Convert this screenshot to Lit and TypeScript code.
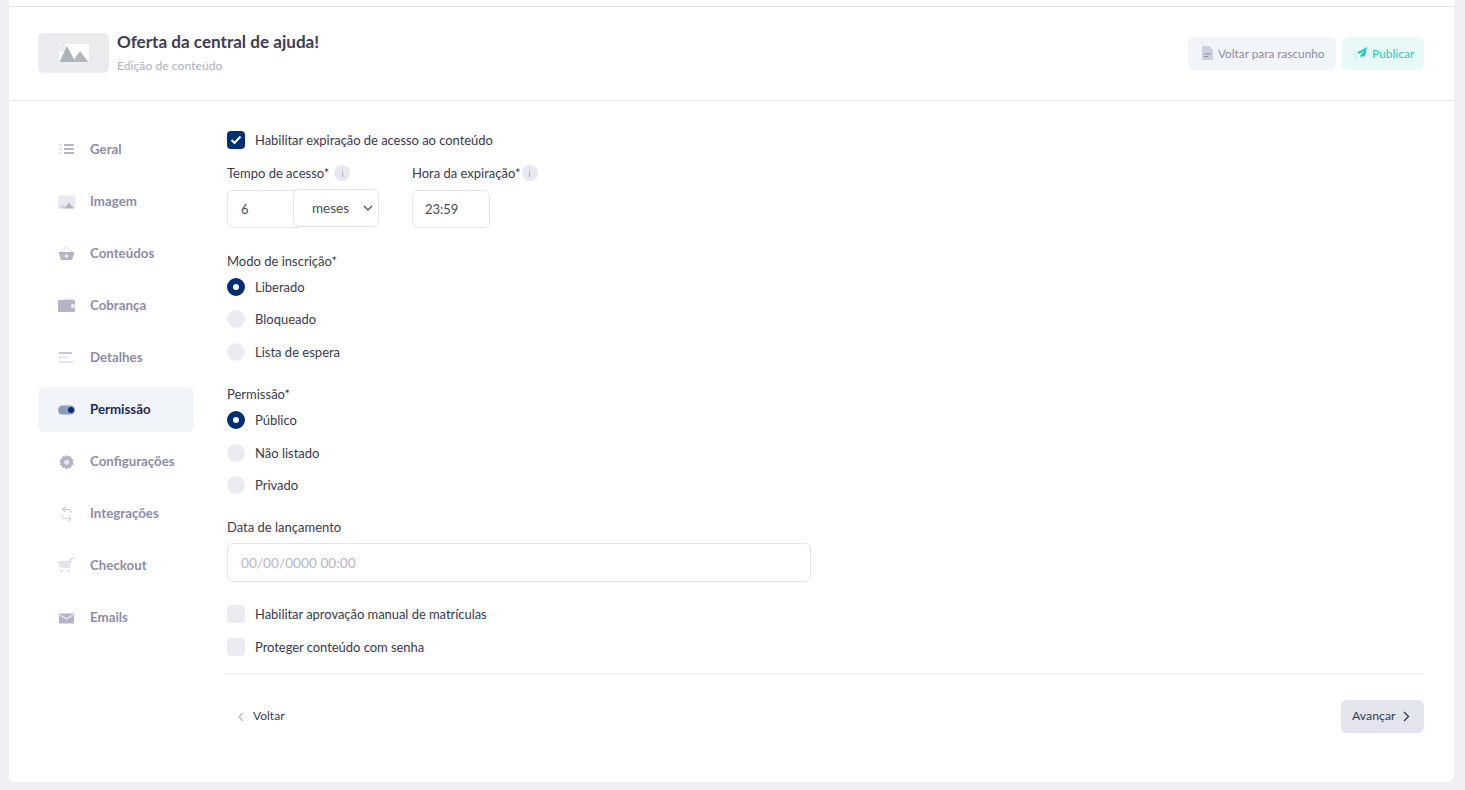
import { LitElement, html, css, svg } from "lit";
import { customElement } from "lit/decorators.js";

const icons: Record<string, any> = {
  geral: svg`<g transform="translate(1 1)"><rect x="0" y="1" width="3" height="2" fill="#e4e4ec"/><rect x="0" y="5" width="3" height="2" fill="#e4e4ec"/><rect x="0" y="9" width="3" height="2" fill="#e4e4ec"/><rect x="5" y="1" width="10" height="2" rx=".5" fill="#b5b3c6"/><rect x="5" y="5" width="10" height="2" rx=".5" fill="#b5b3c6"/><rect x="5" y="9" width="10" height="2" rx=".5" fill="#b5b3c6"/></g>`,
  imagem: svg`<g transform="translate(0 1.500)"><rect x="0" y="0" width="17" height="13" fill="#e9e9f0"/><path d="M6 13l5-6 5 6z" fill="#b5b3c6"/><path d="M1 13l4-4 3 4z" fill="#d3d3de"/></g>`,
  conteudos: svg`<g transform="translate(0 .5)"><path d="M2.500 6L8.500 0.800 14.500 6" fill="none" stroke="#e4e4ec" stroke-width="1.200"/><path d="M0.500 5.500h16l-2.200 7.200a1 1 0 0 1-1 .8H3.700a1 1 0 0 1-1-.8z" fill="#b5b3c6"/><circle cx="8.500" cy="9.500" r="1.600" fill="#fff"/></g>`,
  cobranca: svg`<path d="M2 2L15 0v2z" fill="#e4e4ec"/><rect x="0" y="2" width="17" height="12" rx="1.200" fill="#b5b3c6"/><circle cx="15" cy="8" r="2.200" fill="#e9e9f0"/>`,
  detalhes: svg`<g transform="translate(1 2)"><rect x="0" y="0" width="13" height="2" fill="#c9c8d6"/><rect x="0" y="4.500" width="9" height="2" fill="#e4e4ec"/><rect x="0" y="9" width="14" height="2" fill="#e4e4ec"/></g>`,
  permissao: svg`<g transform="translate(0 3.500)"><rect x="0" y="0" width="17" height="9" rx="4.500" fill="#8d9cbd"/><circle cx="13" cy="4.500" r="3" fill="#002e75"/></g>`,
  config: svg`<g transform="translate(1 1) scale(.9)"><path d="M8.500 0l2 1.800 2.700-.3 .8 2.600 2.300 1.400-.9 2.500.9 2.500-2.300 1.400-.8 2.600-2.700-.3-2 1.800-2-1.800-2.700.3-.8-2.600-2.300-1.400.9-2.500-.9-2.500 2.300-1.400.8-2.600 2.700.3z" fill="#b5b3c6"/><circle cx="8.500" cy="8" r="2.800" fill="#e9e9f0"/></g>`,
  integ: svg`<g transform="translate(1 0)"><path d="M6.500 0.800L3.500 3.500 6.500 6M3.500 3.500H9.500a2.500 2.500 0 0 1 2.500 2.500v0.500" fill="none" stroke="#c9c8d6" stroke-width="1.200"/><path d="M9 10l3 2.700-3 2.800M12 12.700H5.500A2.500 2.500 0 0 1 3 10.200V8" fill="none" stroke="#d9d9e3" stroke-width="1.200"/></g>`,
  checkout: svg`<path d="M0 3h13l-1 7H2z" fill="#e4e4ec"/><path d="M12 4l1-3.500h3" fill="none" stroke="#d3d3de" stroke-width="1.200"/><circle cx="3.500" cy="13" r="1" fill="#c9c8d6"/><circle cx="10.500" cy="13" r="1" fill="#c9c8d6"/>`,
  emails: svg`<g transform="translate(1 3.500)"><rect x="0" y="0" width="15" height="10" rx="1" fill="#b5b3c6"/><path d="M1 1.500l6.500 4 6.500-4" fill="none" stroke="#eeeef3" stroke-width="1.400"/></g>`,
};

const nav: [string, string][] = [
  ["geral", "Geral"], ["imagem", "Imagem"], ["conteudos", "Conteúdos"], ["cobranca", "Cobrança"], ["detalhes", "Detalhes"],
  ["permissao", "Permissão"], ["config", "Configurações"], ["integ", "Integrações"], ["checkout", "Checkout"], ["emails", "Emails"],
];

@customElement("app-root")
export class AppRoot extends LitElement {
  static styles = css`
    :host { display: block; width: 1465px; height: 790px; background: #eef0f4; overflow: hidden;
      font-family: "Lato", "Liberation Sans", sans-serif; font-size: 13px; color: #3b3a4d; box-sizing: border-box; padding: 0 11px 0 9px; }
    * { box-sizing: border-box; }
    .card { height: 782px; background: #fff; border-radius: 0 0 6px 6px; display: flex; flex-direction: column; padding-top: 6px; }
    .header { height: 95px; border-top: 1px solid #e3e5ee; border-bottom: 1px solid #e3e5ee; display: flex; align-items: center; padding: 0 30px 0 29px; }
    .thumb { width: 71px; height: 40px; border-radius: 5px; background: #eaecf0; display: flex; align-items: center; justify-content: center; margin-right: 8px; margin-bottom: 2px; }
    .titles { flex: 1; display: flex; flex-direction: column; margin-bottom: 2px; }
    .title { font-size: 17.1px; font-weight: 700; color: #3e3d50; line-height: 20px; }
    .sub { font-size: 12.2px; color: #b1afc0; line-height: 16px; margin-top: 6px; }
    .btn { height: 33px; border-radius: 6px; display: flex; align-items: center; padding-bottom: 1px; }
    .btn.draft { width: 148px; background: #f1f4f8; color: #8e8ca6; padding-left: 14px; gap: 5px; margin-right: 6px; font-size: 11.8px; }
    .btn.pub { width: 82px; background: #e8f9f7; color: #2ccbbb; padding-left: 12px; gap: 4px; font-size: 12px; }
    .body { flex: 1; display: flex; padding: 26px 30px 0 29px; }
    .side { width: 156px; display: flex; flex-direction: column; gap: 7px; margin-right: 30px; flex: none; }
    .item { height: 45px; border-radius: 6px; display: flex; align-items: center; padding-left: 20px; color: #8e8ca6; font-weight: 700; font-size: 13.3px; }
    .item.on { background: #f1f4f8; color: #1c2b57; }
    .item span { padding-bottom: 2px; }
    .ico { width: 19px; height: 16px; margin-right: 13px; flex: none; }
    .main { flex: 1; padding-top: 4px; padding-left: 3px; }
    .check { display: flex; align-items: center; height: 18px; gap: 10px; letter-spacing: -0.05px; }
    .box { width: 18px; height: 18px; border-radius: 4px; background: #eaecf2; flex: none; display: flex; align-items: center; justify-content: center; }
    .box.on { background: #002e75; }
    .radio { display: flex; align-items: center; height: 18px; gap: 10px; }
    .dot { width: 18px; height: 18px; border-radius: 50%; background: #eaecf2; flex: none; }
    .dot.on { background: #fff; border: 6px solid #002e75; }
    .fields { display: flex; margin-top: 15px; }
    .f1 { width: 185px; }
    .lab { display: flex; align-items: center; height: 18px; color: #3b3a4d; }
    .i { width: 16px; height: 16px; border-radius: 50%; background: #e8e9f0; color: #a5a5b5; font-size: 10px; display: flex; align-items: center; justify-content: center; margin-left: 5px; }
    .f2 .i { margin-left: 1px; }
    .inrow { display: flex; margin-top: 8px; align-items: flex-start; }
    .in { height: 38px; border: 1px solid #e3e5ee; border-radius: 6px; background: #fff; display: flex; align-items: center; padding-left: 13px; color: #4a4a5c; }
    .num { width: 76px; }
    .sel { width: 86px; margin-left: -10px; margin-top: -1px; position: relative; justify-content: space-between; padding: 0 5px 0 18px; font-size: 13.5px; }
    .time { width: 78px; padding-left: 12px; }
    .group { margin-top: 24px; }
    .opts { display: flex; flex-direction: column; gap: 14.5px; margin-top: 8px; }
    .g1 .opts { margin-top: 7.5px; }
    .g2 { margin-top: 24.5px; }
    .date { width: 584px; height: 39px; margin-top: 7px; color: #b7b6c4; font-size: 13.7px; }
    .checks { margin-top: 23px; display: flex; flex-direction: column; gap: 15px; }
    .rule { height: 1px; background: #ebecf0; margin-top: 17px; margin-left: -3px; }
    .foot { display: flex; align-items: center; justify-content: space-between; margin-top: 26px; padding-left: 11px; height: 33px; }
    .back { display: flex; align-items: center; gap: 9px; font-size: 12px; }
    .next { width: 83px; height: 33px; border-radius: 6px; background: #e3e5ee; display: flex; align-items: center; justify-content: flex-start; padding-left: 11px; gap: 8px; color: #3b3a4d; font-size: 12.3px; }
    .up { padding-bottom: 2px; }
  `;

  opt(label: string, on = false) {
    return html`<div class="radio"><span class="dot ${on ? "on" : ""}"></span>${label}</div>`;
  }

  render() {
    return html`<div class="card">
      <div class="header">
        <div class="thumb">
          <svg width="30" height="18" viewBox="0 0 30 18"><rect width="30" height="18" fill="#fff"/><circle cx="4" cy="4" r="4" fill="#eaecf0"/><path d="M0.500 18L8 2l8.500 16z" fill="#adb3ba"/><path d="M13 18l8-11 8.500 11z" fill="#b3b8bf"/></svg>
        </div>
        <div class="titles"><div class="title">Oferta da central de ajuda!</div><div class="sub">Edição de conteúdo</div></div>
        <div class="btn draft">
          <svg width="11" height="14" viewBox="0 0 11 14"><path d="M0 1a1 1 0 0 1 1-1h6l4 4v9a1 1 0 0 1-1 1H1a1 1 0 0 1-1-1z" fill="#ced0dc"/><path d="M2 8h7M2 10.500h4" stroke="#8e8ca6" stroke-width="1"/></svg>
          Voltar para rascunho
        </div>
        <div class="btn pub">
          <svg width="14" height="13" viewBox="0 0 14 13"><path d="M13 0L3 5.500l2.500 1.500 5-3.500-4 4.500v3l2-2 2.500 1z" fill="#2ccbbb"/><path d="M2.500 9L1 10.500M4 10.500l-2 2M1.500 7L0 8" stroke="#9fe8df" stroke-width="1"/></svg>
          Publicar
        </div>
      </div>
      <div class="body">
        <div class="side">
          ${nav.map(([k, l]) => html`<div class="item ${k === "permissao" ? "on" : ""}">
            <svg class="ico" viewBox="0 0 19 16">${icons[k]}</svg><span>${l}</span></div>`)}
        </div>
        <div class="main">
          <div class="check"><span class="box on"><svg width="12" height="10" viewBox="0 0 12 10"><path d="M1.500 5l3 3 6-6.500" fill="none" stroke="#fff" stroke-width="2"/></svg></span>Habilitar expiração de acesso ao conteúdo</div>
          <div class="fields">
            <div class="f1">
              <div class="lab">Tempo de acesso*<span class="i">i</span></div>
              <div class="inrow"><div class="in num">6</div><div class="in sel">meses
                <svg width="10" height="6" viewBox="0 0 10 6"><path d="M1 1l4 4 4-4" fill="none" stroke="#55556a" stroke-width="1.400"/></svg></div></div>
            </div>
            <div class="f2">
              <div class="lab">Hora da expiração*<span class="i">i</span></div>
              <div class="inrow"><div class="in time">23:59</div></div>
            </div>
          </div>
          <div class="group g1"><div class="lab">Modo de inscrição*</div>
            <div class="opts">${this.opt("Liberado", true)}${this.opt("Bloqueado")}${this.opt("Lista de espera")}</div></div>
          <div class="group g2"><div class="lab">Permissão*</div>
            <div class="opts">${this.opt("Público", true)}${this.opt("Não listado")}${this.opt("Privado")}</div></div>
          <div class="group"><div class="lab">Data de lançamento</div>
            <div class="in date">00/00/0000 00:00</div></div>
          <div class="checks">
            <div class="check"><span class="box"></span>Habilitar aprovação manual de matrículas</div>
            <div class="check"><span class="box"></span>Proteger conteúdo com senha</div>
          </div>
          <div class="rule"></div>
          <div class="foot">
            <div class="back"><svg width="6" height="10" viewBox="0 0 6 10"><path d="M5 1L1 5l4 4" fill="none" stroke="#b5b5c3" stroke-width="1.200"/></svg><span class="up">Voltar</span></div>
            <div class="next"><span class="up">Avançar</span><svg width="7" height="11" viewBox="0 0 7 11"><path d="M1 1l4.500 4.500L1 10" fill="none" stroke="#3b3a4d" stroke-width="1.400"/></svg></div>
          </div>
        </div>
      </div>
    </div>`;
  }
}
